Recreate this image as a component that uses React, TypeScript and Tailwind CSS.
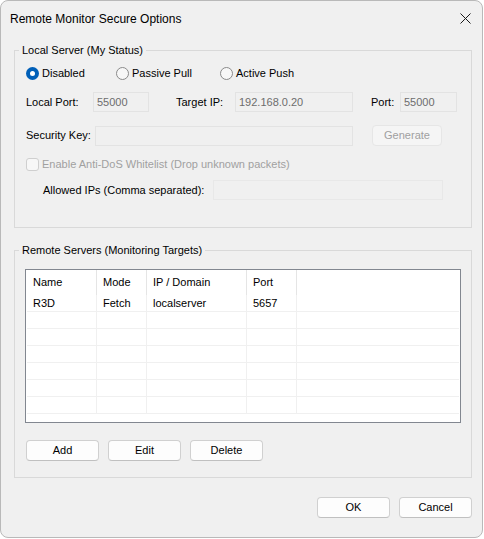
import React from "react";

const font = { fontFamily: '"Liberation Sans", Arial, sans-serif' };

const Radio = ({ checked, label, className }: { checked?: boolean; label: string; className?: string }) => (
  <label className={`flex items-center gap-[3px] ${className ?? ""}`}>
    {checked ? (
      <span className="flex h-[13px] w-[13px] items-center justify-center rounded-full bg-[#005fb8]">
        <span className="h-[5px] w-[5px] rounded-full bg-white" />
      </span>
    ) : (
      <span className="h-[13px] w-[13px] rounded-full border border-[#8a8a8a] bg-[#f7f7f7]" />
    )}
    <span>{label}</span>
  </label>
);

const Field = ({ value, className }: { value?: string; className?: string }) => (
  <div className={`flex h-[20px] items-center border border-[#e3e3e3] bg-[#f0f0f0] px-[3px] text-[#6d6d6d] ${className ?? ""}`}>
    {value}
  </div>
);

const Btn = ({ children, className }: { children: React.ReactNode; className?: string }) => (
  <button className={`flex h-[21px] items-center justify-center rounded-[4px] border border-[#d0d0d0] border-b-[#c0c0c0] bg-[#fdfdfd] text-black ${className ?? ""}`}>
    {children}
  </button>
);

const cols = [
  { name: "Name", w: "w-[71px]", pl: "pl-[7px]" },
  { name: "Mode", w: "w-[50px]", pl: "pl-[6px]" },
  { name: "IP / Domain", w: "w-[100px]", pl: "pl-[6px]" },
  { name: "Port", w: "w-[50px]", pl: "pl-[6px]" },
];

const rows = [
  ["R3D", "Fetch", "localserver", "5657"],
  ["", "", "", ""],
  ["", "", "", ""],
  ["", "", "", ""],
  ["", "", "", ""],
  ["", "", "", ""],
  ["", "", "", ""],
];

export default function App() {
  return (
    <div className="h-[539px] w-[484px] bg-white text-[11px] text-black" style={font}>
      <div className="flex h-[538px] w-[483px] flex-col rounded-[8px] border border-[#b9b9b9] bg-[#f0f0f0]">
        {/* title bar */}
        <div className="flex h-[35px] items-center justify-between pl-[9px] pr-[10px]">
          <span className="text-[12px] text-black">Remote Monitor Secure Options</span>
          <svg width="11" height="11" viewBox="0 0 11 11" className="mr-[1px]">
            <path d="M0.5 0.5 L10.5 10.5 M10.5 0.5 L0.5 10.5" stroke="#1a1a1a" strokeWidth="1" />
          </svg>
        </div>

        {/* Local server group */}
        <fieldset className="ml-[13px] mt-[7px] w-[458px] border border-[#d9d9d9] pb-[27px] pl-[11px]">
          <legend className="-ml-[7px] px-[3px] leading-[14px]">Local Server (My Status)</legend>
          <div className="mt-[8px] flex h-[16px] items-center">
            <Radio checked label="Disabled" className="w-[90px]" />
            <Radio label="Passive Pull" className="w-[104px]" />
            <Radio label="Active Push" />
          </div>
          <div className="mt-[11px] flex h-[20px] items-center">
            <span className="w-[67px]">Local Port:</span>
            <Field value="55000" className="w-[56px]" />
            <span className="ml-[27px] w-[59px]">Target IP:</span>
            <Field value="192.168.0.20" className="w-[118px]" />
            <span className="ml-[18px] w-[29px]">Port:</span>
            <Field value="55000" className="w-[57px]" />
          </div>
          <div className="mt-[13px] flex h-[21px] items-center">
            <span className="w-[69px]">Security Key:</span>
            <Field className="w-[258px]" />
            <button className="ml-[19px] flex h-[21px] w-[70px] items-center justify-center rounded-[4px] border border-[#e6e6e6] bg-[#f5f5f5] text-[#a0a0a0]">
              Generate
            </button>
          </div>
          <div className="mt-[11px] flex h-[14px] items-center gap-[3px] text-[#a0a0a0]">
            <span className="h-[13px] w-[13px] rounded-[3px] border border-[#cfcfcf] bg-[#f7f7f7]" />
            <span>Enable Anti-DoS Whitelist (Drop unknown packets)</span>
          </div>
          <div className="mt-[9px] flex h-[20px] items-center">
            <span className="ml-[17px] w-[170px]">Allowed IPs (Comma separated):</span>
            <div className="h-[20px] w-[230px] border border-[#e8e8e8] bg-[#f0f0f0]" />
          </div>
        </fieldset>

        {/* Remote servers group */}
        <fieldset className="ml-[13px] mt-[15px] w-[458px] border border-[#d9d9d9] px-[10px] pb-[16px]">
          <legend className="ml-[-6px] px-[3px] leading-[14px]">Remote Servers (Monitoring Targets)</legend>
          <div className="mt-[12px] flex h-[154px] w-[436px] flex-col overflow-hidden border border-[#828790] bg-white">
            <div className="flex h-[25px] shrink-0">
              {cols.map((c) => (
                <div key={c.name} className={`flex items-center border-r border-[#e5e5e5] ${c.w} ${c.pl}`}>
                  {c.name}
                </div>
              ))}
            </div>
            {rows.map((r, i) => (
              <div key={i} className="mx-[1px] flex h-[17px] shrink-0 border-b border-[#f0f0f0]">
                {r.map((v, j) => (
                  <div
                    key={j}
                    className={`flex items-center border-r border-[#f0f0f0] ${cols[j].w} ${cols[j].pl} ${j === 0 ? "-ml-[1px]" : ""}`}
                  >
                    {v}
                  </div>
                ))}
              </div>
            ))}
          </div>
          <div className="mt-[17px] flex gap-[9px] pl-[1px]">
            <Btn className="w-[73px]">Add</Btn>
            <Btn className="w-[73px]">Edit</Btn>
            <Btn className="w-[73px]">Delete</Btn>
          </div>
        </fieldset>

        {/* dialog buttons */}
        <div className="mt-[19px] flex justify-end gap-[9px] pr-[10px]">
          <Btn className="w-[73px] border-[#005fb8] border-b-[#005fb8]">OK</Btn>
          <Btn className="w-[73px]">Cancel</Btn>
        </div>
      </div>
    </div>
  );
}
